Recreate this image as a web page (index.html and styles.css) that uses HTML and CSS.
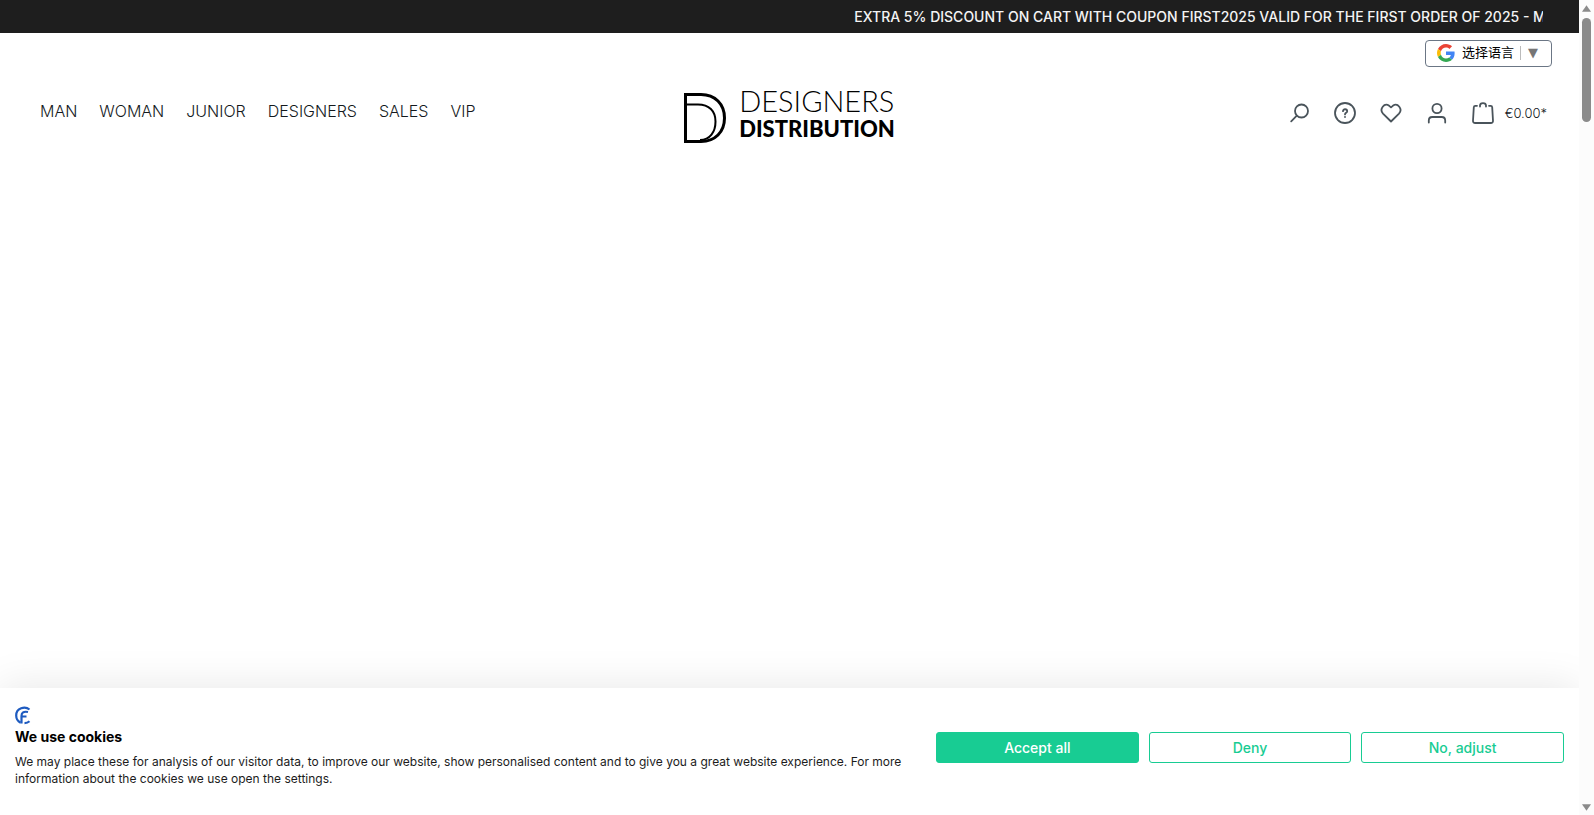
FILE: index.html
```html
<!DOCTYPE html>
<html lang="en">
<head>
<meta charset="utf-8">
<title>Designers Distribution</title>
<link rel="stylesheet" href="styles.css">
</head>
<body>
<div class="page">
  <div class="promo"><p class="promo-track">EXTRA 5% DISCOUNT ON CART WITH COUPON FIRST2025 VALID FOR THE FIRST ORDER OF 2025 - MIN</p></div>
  <div class="topbar">
    <button class="language" type="button">
      <svg class="google" viewBox="0 0 48 48" aria-hidden="true">
        <path fill="#EA4335" d="M24 9.5c3.54 0 6.71 1.22 9.21 3.6l6.85-6.85C35.9 2.38 30.47 0 24 0 14.62 0 6.51 5.38 2.56 13.22l7.98 6.19C12.43 13.72 17.74 9.5 24 9.5z"/>
        <path fill="#4285F4" d="M46.98 24.55c0-1.57-.15-3.09-.38-4.55H24v9.02h12.94c-.58 2.96-2.26 5.48-4.78 7.18l7.73 6c4.51-4.18 7.09-10.36 7.09-17.65z"/>
        <path fill="#FBBC05" d="M10.53 28.59c-.48-1.45-.76-2.99-.76-4.59s.27-3.14.76-4.59l-7.98-6.19C.92 16.46 0 20.12 0 24c0 3.88.92 7.54 2.56 10.78l7.97-6.19z"/>
        <path fill="#34A853" d="M24 48c6.48 0 11.93-2.13 15.89-5.81l-7.73-6c-2.15 1.45-4.92 2.3-8.16 2.3-6.26 0-11.57-4.22-13.47-9.91l-7.98 6.19C6.51 42.62 14.62 48 24 48z"/>
      </svg>
      <span class="language-name" lang="zh-CN">选择语言</span>
      <span class="language-arrow">▼</span>
    </button>
  </div>
  <header class="header">
    <nav class="nav">
      <a href="#">MAN</a><a href="#">WOMAN</a><a href="#">JUNIOR</a><a href="#">DESIGNERS</a><a href="#">SALES</a><a href="#">VIP</a>
    </nav>
    <a class="logo" href="#">
      <svg class="logo-mark" viewBox="0 0 42 50" fill="none" stroke="#000" aria-hidden="true">
        <path stroke-width="3" d="M1.5 1.5H17C31 1.5 40.500 11 40.500 25S31 48.500 17 48.500H1.500Z"/>
        <path stroke-width="2" d="M2 11.500H14C25 11.500 31.500 18 31.500 28.500C31.500 39 26 47 16 47"/>
      </svg>
      <span class="logo-words"><span class="logo-light">DESIGNERS</span><span class="logo-bold">DISTRIBUTION</span></span>
    </a>
    <div class="actions">
      <button type="button" aria-label="Search"><svg class="icon" viewBox="0 0 22 22"><circle cx="13.500" cy="9" r="6.500"/><path d="M8.800 13.700L3.200 19.300"/></svg></button>
      <button type="button" aria-label="Help"><svg class="icon" viewBox="0 0 22 22"><circle cx="11" cy="11" r="10"/><path d="M9 9.200C9 6.500 13.200 6.700 13.200 9.200C13.200 10.800 11 10.800 11 12.400"/><path d="M11 14.800V15"/></svg></button>
      <button type="button" aria-label="Wishlist"><svg class="icon" viewBox="0 0 22 22"><path d="M11 19.500L3 11.600C-1 7.300 4.200.200 9.200 3.800L11 5.400L12.800 3.800C17.800.200 23 7.300 19 11.600Z"/></svg></button>
      <button type="button" aria-label="Account"><svg class="icon" viewBox="0 0 22 22"><circle cx="11" cy="6.500" r="4.600"/><path d="M2.800 20.500V18.500C2.800 16.300 4.300 15 6.300 15H15.700C17.700 15 19.200 16.300 19.200 18.500V20.500"/></svg></button>
      <button class="cart" type="button"><svg class="icon" viewBox="0 0 22 22"><path d="M5 3.800H3.300Q1.900 3.800 1.800 5.200L1 18.700Q.900 21 3.200 21H18.800Q21.100 21 21 18.700L20.200 5.200Q20.100 3.800 18.700 3.800H17"/><path d="M8 4.600V3.600C8 .200 14 .200 14 3.600V4.600"/></svg><span>€0.00*</span></button>
    </div>
  </header>
  <main class="content"></main>
  <section class="cookies" aria-labelledby="cookies-title">
    <div class="cookies-text">
      <svg class="cookies-logo" viewBox="0 0 16 18" fill="none" stroke="#1e5bc0" stroke-width="2.200" aria-hidden="true">
        <path d="M14.500 3C10-.500 1.200 1.400 1.200 9C1.200 12.400 2.800 14.800 5.600 16.200"/>
        <path d="M13 5.500C8.500 4.700 6.500 6 6.500 9.500V17M6.500 10H11.500M9.500 16.600C11.500 16.600 13.200 16 14.500 14.800"/>
      </svg>
      <h2 id="cookies-title">We use cookies</h2>
      <p>We may place these for analysis of our visitor data, to improve our website, show personalised content and to give you a great website experience. For more information about the cookies we use open the settings.</p>
    </div>
    <div class="cookies-actions">
      <button class="choice choice-primary" type="button">Accept all</button>
      <button class="choice" type="button">Deny</button>
      <button class="choice" type="button">No, adjust</button>
    </div>
  </section>
</div>
<div class="scrollbar" aria-hidden="true">
  <svg class="arrow" viewBox="0 0 10 7"><path d="M5 0L10 7H0Z"/></svg>
  <div class="thumb"></div>
  <svg class="arrow arrow-down" viewBox="0 0 10 7"><path d="M0 0H10L5 7Z"/></svg>
</div>
</body>
</html>
```
FILE: styles.css
```css
* { box-sizing: border-box; }
body {
  margin: 0;
  height: 100vh;
  display: grid;
  grid-template-columns: 1fr 15px;
  background: #fff;
  color: #14191d;
  font-family: Inter, "Noto Sans CJK SC", sans-serif;
}
button { font: inherit; color: inherit; background: none; border: 0; padding: 0; }
a { color: inherit; text-decoration: none; }
h2, p { margin: 0; }

.page { display: flex; flex-direction: column; min-width: 0; overflow: hidden; }

.promo { background: #1e1e1e; padding: 0 36px; }
.promo-track {
  padding-left: 54.3%;
  overflow: hidden;
  white-space: nowrap;
  color: #f4f4f4;
  font-size: 14px;
  font-weight: 500;
  line-height: 33px;
}

.topbar { display: flex; justify-content: flex-end; padding: 7px 27px 0; }
.language {
  display: flex;
  align-items: center;
  height: 27px;
  padding: 0 13px 1px 11px;
  border: 1px solid #6b7685;
  border-radius: 4px;
  color: #000;
  font-size: 13px;
}
.google { width: 18px; height: 18px; margin-right: 7px; }
.language-name { padding: 0 6px 2px 0; line-height: 16px; font-family: "Noto Sans CJK SC", sans-serif; }
.language-arrow { padding-left: 7px; border-left: 1px solid #bbb; color: #767676; line-height: 14px; font-family: "DejaVu Sans", sans-serif; }

.header {
  display: grid;
  grid-template-columns: 1fr auto 1fr;
  align-items: center;
  padding: 20px 32px 0;
}
.nav { display: flex; gap: 22px; font-size: 16px; font-weight: 300; line-height: 24px; padding: 0 0 10px 8px; }
.logo { display: flex; align-items: center; gap: 13px; color: #000; font-family: Lato, sans-serif; }
.logo-mark { width: 42px; height: 50px; margin-top: 4px; }
.logo-words { display: flex; flex-direction: column; padding-bottom: 2px; }
.logo-light { font-size: 29px; font-weight: 300; line-height: 28px; }
.logo-bold { font-size: 22px; font-weight: 900; line-height: 28px; }
.actions { display: flex; justify-content: flex-end; align-items: center; gap: 24px; padding-bottom: 6px; }
.actions button { display: flex; align-items: center; gap: 11px; }
.icon {
  width: 22px;
  height: 22px;
  fill: none;
  stroke: #4a545b;
  stroke-width: 1.8;
  stroke-linecap: round;
  stroke-linejoin: round;
}
.actions .cart { font-size: 13px; font-weight: 300; }

.content { flex: 1; }

.cookies {
  display: grid;
  grid-template-columns: minmax(0, 1fr) 628px;
  align-items: center;
  column-gap: 30px;
  padding: 18px 15px 28px;
  background: #fff;
  box-shadow: 0 0 40px rgba(0, 0, 0, 0.1);
  color: #000;
}
.cookies-logo { display: block; width: 16px; height: 19px; }
.cookies h2 { font-size: 14px; font-weight: 700; line-height: 24px; }
.cookies p { padding-top: 4px; font-size: 12px; line-height: 17px; color: #1c1c1c; }
.cookies-actions { display: grid; grid-template-columns: repeat(3, 1fr); gap: 10px; padding-top: 2px; }
.choice {
  height: 31px;
  border: 1px solid #18cc93;
  border-radius: 3px;
  color: #18cc93;
  font-size: 14px;
  font-weight: 500;
}
.choice-primary { background: #18cc93; color: #fff; }

.scrollbar { display: flex; flex-direction: column; align-items: center; padding: 5px 0 4px; background: #fcfcfc; }
.arrow { width: 9px; height: 7px; fill: #8b8b8b; }
.thumb { width: 9px; height: 104px; margin-top: 6px; border-radius: 5px; background: #8b8b8b; }
.arrow-down { margin-top: auto; }
```
